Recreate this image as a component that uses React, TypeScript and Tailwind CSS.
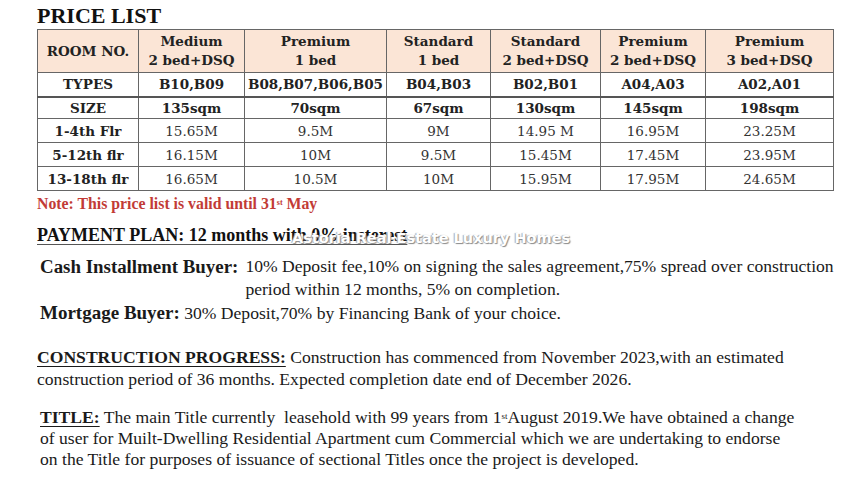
import React from "react";

const columns = [
  { top: "Medium", bottom: "2 bed+DSQ", types: "B10,B09", size: "135sqm", prices: ["15.65M", "16.15M", "16.65M"] },
  { top: "Premium", bottom: "1 bed", types: "B08,B07,B06,B05", size: "70sqm", prices: ["9.5M", "10M", "10.5M"] },
  { top: "Standard", bottom: "1 bed", types: "B04,B03", size: "67sqm", prices: ["9M", "9.5M", "10M"] },
  { top: "Standard", bottom: "2 bed+DSQ", types: "B02,B01", size: "130sqm", prices: ["14.95 M", "15.45M", "15.95M"] },
  { top: "Premium", bottom: "2 bed+DSQ", types: "A04,A03", size: "145sqm", prices: ["16.95M", "17.45M", "17.95M"] },
  { top: "Premium", bottom: "3 bed+DSQ", types: "A02,A01", size: "198sqm", prices: ["23.25M", "23.95M", "24.65M"] },
];

const floors = ["1-4th Flr", "5-12th flr", "13-18th flr"];

export default function App() {
  return (
    <div className="w-[864px] h-[483px] bg-white text-[#1a1a1a] font-['Liberation_Serif',serif] pl-[37px] pt-[3px] overflow-hidden">
      {/* Title */}
      <h1 className="text-[22px] leading-[26px] font-bold text-[#111]">PRICE LIST</h1>

      {/* Price table */}
      <table className="border-collapse text-[13.5px] text-[#222] font-['DejaVu_Serif',serif]">
        <colgroup>
          <col className="w-[101px]" />
          <col className="w-[106px]" />
          <col className="w-[142px]" />
          <col className="w-[104px]" />
          <col className="w-[110px]" />
          <col className="w-[105px]" />
          <col className="w-[128px]" />
        </colgroup>
        <tbody>
          <tr className="h-[43px] bg-[#fbe5d6]">
            <td className="border border-[#666] text-center font-bold leading-[19px]">ROOM NO.</td>
            {columns.map((c, i) => (
              <td key={i} className="border border-[#666] text-center font-bold leading-[19px]">
                {c.top}
                <br />
                {c.bottom}
              </td>
            ))}
          </tr>
          <tr className="h-[24px]">
            <td className="border border-[#666] border-b-2 border-b-[#555] text-center font-bold leading-[20px]">TYPES</td>
            {columns.map((c, i) => (
              <td key={i} className="border border-[#666] border-b-2 border-b-[#555] text-center font-bold leading-[20px]">
                {c.types}
              </td>
            ))}
          </tr>
          <tr className="h-[22px]">
            <td className="border border-[#666] text-center font-bold leading-[20px]">SIZE</td>
            {columns.map((c, i) => (
              <td key={i} className="border border-[#666] text-center font-bold leading-[20px]">
                {c.size}
              </td>
            ))}
          </tr>
          {floors.map((f, r) => (
            <tr key={f} className="h-[24px]">
              <td className="border border-[#666] text-center font-bold leading-[20px]">{f}</td>
              {columns.map((c, i) => (
                <td key={i} className="border border-[#666] text-center leading-[20px] text-[#333]">
                  {c.prices[r]}
                </td>
              ))}
            </tr>
          ))}
        </tbody>
      </table>

      {/* Note */}
      <p className="mt-[3px] text-[15.8px] leading-[20px] font-bold text-[#c23b36]">
        Note: This price list is valid until 31<sup className="text-[8px]">st</sup> May
      </p>

      {/* Payment plan */}
      <div className="relative mt-[10px] w-fit">
        <p className="text-[18px] leading-[22px] font-bold text-[#111] underline underline-offset-[3px] decoration-[#555]">
          PAYMENT PLAN: 12 months with 0% insterest
        </p>
        <span className="absolute left-[255px] top-[4px] whitespace-nowrap font-['DejaVu_Sans',sans-serif] text-[14.5px] font-bold text-white [text-shadow:1px_1px_1px_#888,-1px_0_1px_#aaa]">
          Astoria Real Estate Luxury Homes
        </span>
      </div>

      <div className="mt-[9px] ml-[3px] flex text-[17.6px] leading-[23px] text-[#1a1a1a]">
        <span className="font-bold text-[18.9px] mr-[7px] whitespace-nowrap">Cash Installment Buyer:</span>
        <span className="whitespace-nowrap">
          10% Deposit fee,10% on signing the sales agreement,75% spread over construction
          <br />
          period within 12 months, 5% on completion.
        </span>
      </div>
      <p className="ml-[3px] text-[17.6px] leading-[23px] whitespace-nowrap">
        <span className="font-bold text-[19px]">Mortgage Buyer:</span> 30% Deposit,70% by Financing Bank of your choice.
      </p>

      {/* Construction progress */}
      <p className="mt-[21px] text-[17.6px] leading-[22px] whitespace-nowrap">
        <span className="font-bold underline underline-offset-[3px]">CONSTRUCTION PROGRESS:</span> Construction has commenced from November 2023,with an estimated
        <br />
        construction period of 36 months. Expected completion date end of December 2026.
      </p>

      {/* Title */}
      <p className="mt-[17px] ml-[3px] text-[17.6px] leading-[21px] whitespace-nowrap">
        <span className="font-bold underline underline-offset-[3px]">TITLE:</span> The main Title currently&nbsp; leasehold with 99 years from 1<sup className="text-[9px]">st</sup>August 2019.We have obtained a change
        <br />
        of user for Muilt-Dwelling Residential Apartment cum Commercial which we are undertaking to endorse
        <br />
        on the Title for purposes of issuance of sectional Titles once the project is developed.
      </p>
    </div>
  );
}
